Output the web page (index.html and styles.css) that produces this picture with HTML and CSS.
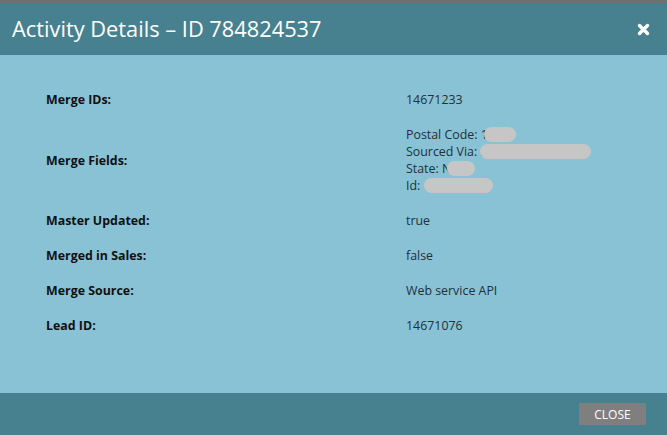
FILE: index.html
```html
<!DOCTYPE html>
<html lang="en">
<head>
    <meta charset="UTF-8">
    <meta name="viewport" content="width=device-width, initial-scale=1.0">
    <title>Activity Details</title>
    <link rel="stylesheet" href="styles.css">
</head>
<body>
    <div class="dialog">
        <div class="dialog-header">
            <h2 class="dialog-title">Activity Details – ID 784824537</h2>
            <button class="close-x" title="Close">
                <svg width="13" height="13" viewBox="0 0 13 13">
                    <path d="M2.5 2.5 L10.5 10.5 M10.5 2.5 L2.5 10.5" stroke="#fff" stroke-width="3.4" stroke-linecap="round"/>
                </svg>
            </button>
        </div>

        <div class="dialog-body">
            <table class="details">
                <tr>
                    <td class="label">Merge IDs:</td>
                    <td class="value">14671233</td>
                </tr>
                <tr>
                    <td class="label">Merge Fields:</td>
                    <td class="value">
                        <div>Postal Code: 1<span class="hidden-val overlap" style="width: 32px;"></span></div>
                        <div>Sourced Via: .<span class="hidden-val overlap" style="width: 111px;"></span></div>
                        <div>State: N<span class="hidden-val overlap" style="width: 28px;"></span></div>
                        <div>Id: <span class="hidden-val" style="width: 69px;"></span></div>
                    </td>
                </tr>
                <tr>
                    <td class="label">Master Updated:</td>
                    <td class="value">true</td>
                </tr>
                <tr>
                    <td class="label">Merged in Sales:</td>
                    <td class="value">false</td>
                </tr>
                <tr>
                    <td class="label">Merge Source:</td>
                    <td class="value">Web service API</td>
                </tr>
                <tr>
                    <td class="label">Lead ID:</td>
                    <td class="value">14671076</td>
                </tr>
            </table>
        </div>

        <div class="dialog-footer">
            <button class="close-button">CLOSE</button>
        </div>
    </div>
</body>
</html>
```

FILE: styles.css
```css
body {
    margin: 0;
    padding-top: 3px;
    background-color: #707070;
    font-family: "Open Sans", Arial, sans-serif;
    font-size: 12.4px;
    line-height: 17px;
    color: #1e2a2e;
}

.dialog {
    height: 432px;
    display: flex;
    flex-direction: column;
}

.dialog-header {
    height: 52px;
    background-color: #47818f;
    display: flex;
    align-items: center;
    justify-content: space-between;
    padding: 0 17px 0 12px;
}

.dialog-title {
    margin: 0;
    font-size: 21.8px;
    font-weight: normal;
    color: #fff;
    line-height: 30px;
}

.close-x {
    background: none;
    border: none;
    padding: 0;
    cursor: pointer;
    display: flex;
}

.dialog-body {
    flex: 1;
    background-color: #89c2d4;
    padding-top: 27px;
}

.details {
    border-collapse: collapse;
}

.details td {
    padding: 9px 0;
    vertical-align: middle;
}

.details .label {
    width: 360px;
    padding-left: 46px;
    font-weight: bold;
    color: #111;
}

.details .value {
    color: #22303a;
}

.hidden-val {
    display: inline-block;
    height: 15px;
    border-radius: 8px;
    background-color: #c6c6c6;
    vertical-align: -3px;
}

.hidden-val.overlap {
    margin-left: -4px;
}

.dialog-footer {
    height: 42px;
    background-color: #47818f;
    display: flex;
    justify-content: flex-end;
    align-items: flex-start;
    padding: 10px 21px 0 0;
    box-sizing: border-box;
}

.close-button {
    width: 67px;
    height: 22px;
    background-color: #7f7f7f;
    color: #fff;
    border: none;
    font-family: "Open Sans", Arial, sans-serif;
    font-size: 12px;
    padding: 0;
    cursor: pointer;
}
```
